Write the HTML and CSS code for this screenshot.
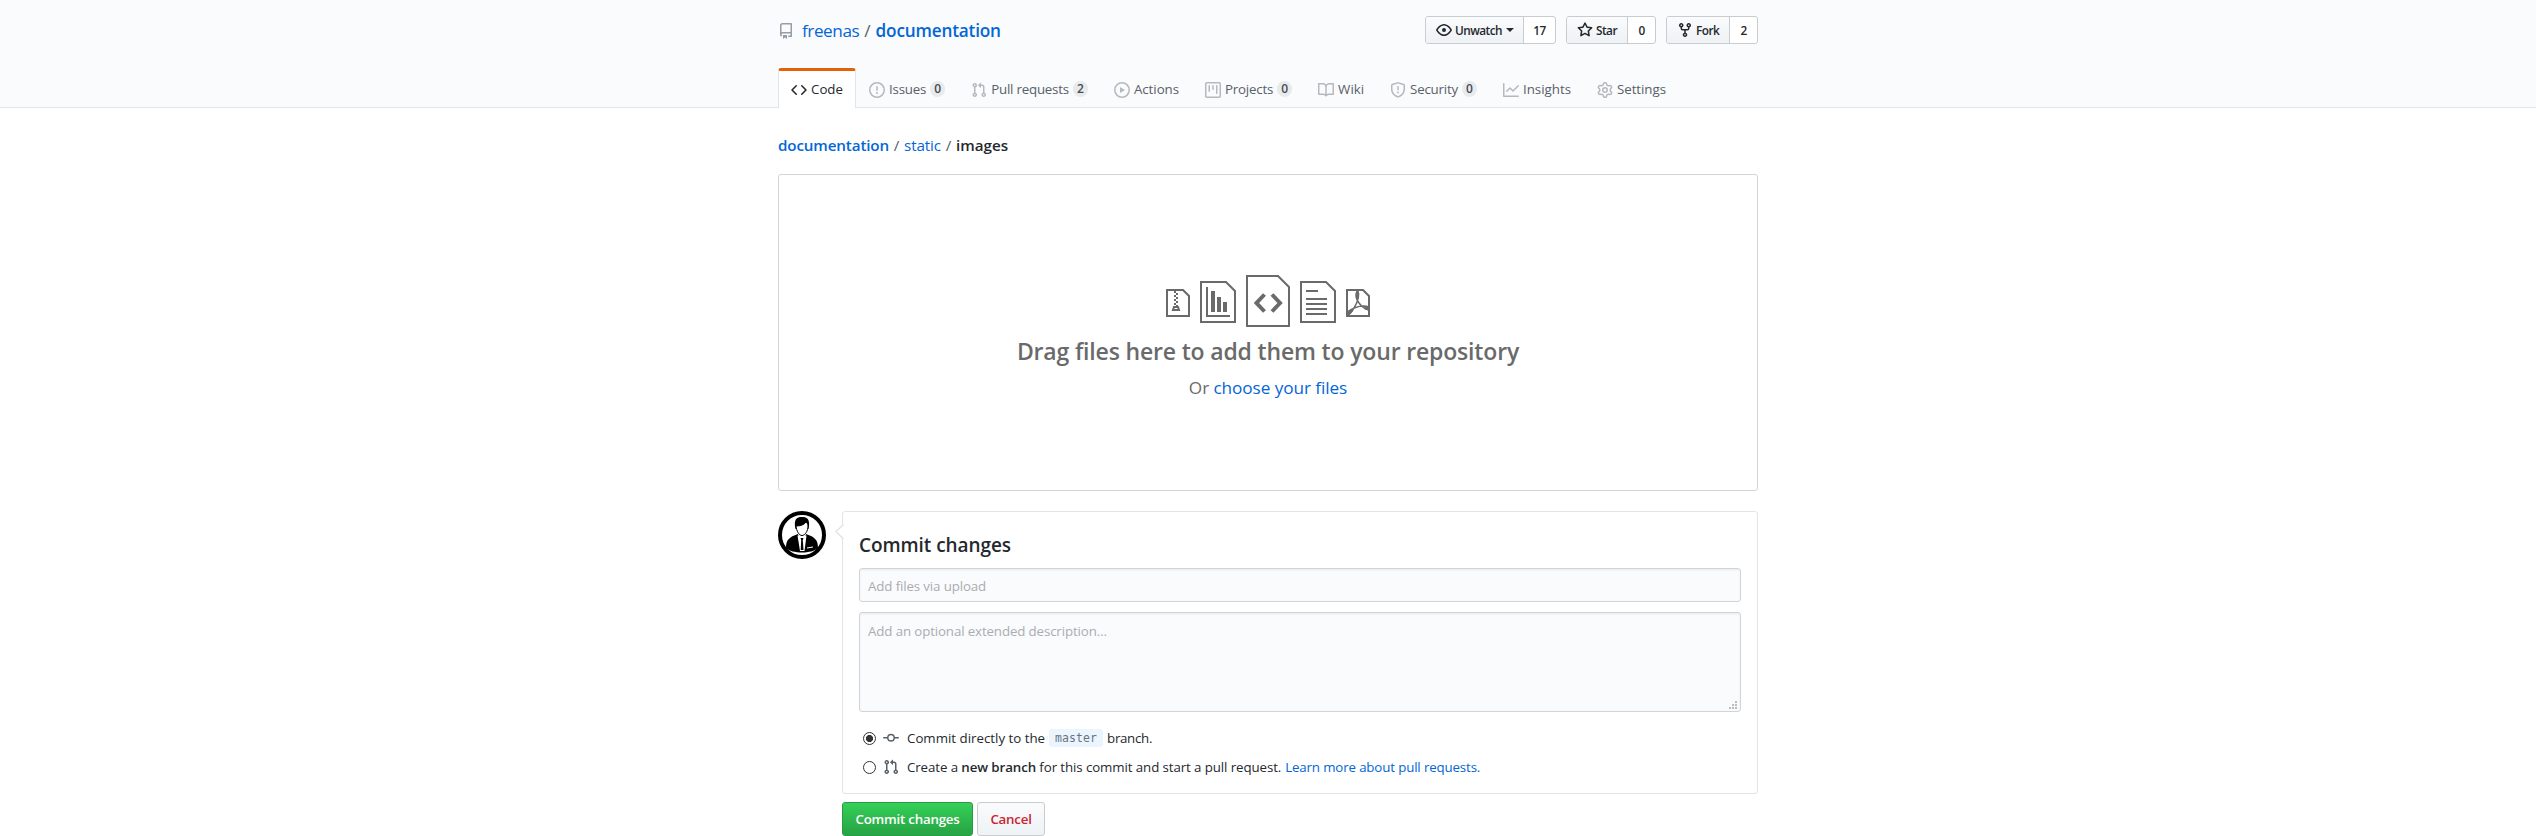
FILE: index.html
```html
<!DOCTYPE html>
<html lang="en">
<head>
<meta charset="utf-8">
<title>Upload files</title>
<link rel="stylesheet" href="styles.css">
</head>
<body>
<svg class="defs" width="0" height="0">
<symbol id="repo" viewBox="0 0 16 16"><path fill-rule="evenodd" d="M2 2.5A2.5 2.5 0 014.5 0h8.75a.75.75 0 01.75.75v12.5a.75.75 0 01-.75.75h-2.5a.75.75 0 110-1.5h1.75v-2h-8a1 1 0 00-.714 1.7.75.75 0 01-1.072 1.05A2.495 2.495 0 012 11.5v-9zm10.5-1V9h-8c-.356 0-.694.074-1 .208V2.5a1 1 0 011-1h8zM5 12.25v3.25a.25.25 0 00.4.2l1.45-1.087a.25.25 0 01.3 0L8.6 15.7a.25.25 0 00.4-.2v-3.25a.25.25 0 00-.25-.25h-3.5a.25.25 0 00-.25.25z"/></symbol>
<symbol id="code" viewBox="0 0 16 16"><path fill-rule="evenodd" d="M4.72 3.22a.75.75 0 011.06 1.06L2.06 8l3.72 3.72a.75.75 0 11-1.06 1.06L.47 8.53a.75.75 0 010-1.06l4.25-4.25zm6.56 0a.75.75 0 10-1.06 1.06L13.94 8l-3.72 3.72a.75.75 0 101.06 1.06l4.25-4.25a.75.75 0 000-1.06l-4.25-4.25z"/></symbol>
<symbol id="issue" viewBox="0 0 16 16"><path fill-rule="evenodd" d="M8 1.5a6.5 6.5 0 100 13 6.5 6.5 0 000-13zM0 8a8 8 0 1116 0A8 8 0 010 8zm9 3a1 1 0 11-2 0 1 1 0 012 0zm-.25-6.25a.75.75 0 00-1.5 0v3.5a.75.75 0 001.5 0v-3.5z"/></symbol>
<symbol id="pull" viewBox="0 0 16 16"><path fill-rule="evenodd" d="M7.177 3.073L9.573.677A.25.25 0 0110 .854v4.792a.25.25 0 01-.427.177L7.177 3.427a.25.25 0 010-.354zM3.75 2.5a.75.75 0 100 1.5.75.75 0 000-1.5zm-2.25.75a2.25 2.25 0 113 2.122v5.256a2.251 2.251 0 11-1.5 0V5.372A2.25 2.25 0 011.5 3.25zM11 2.5h-1V4h1a1 1 0 011 1v5.628a2.251 2.251 0 101.5 0V5A2.5 2.5 0 0011 2.5zm1 10.25a.75.75 0 111.5 0 .75.75 0 01-1.5 0zM3.75 12a.75.75 0 100 1.5.75.75 0 000-1.5z"/></symbol>
<symbol id="play" viewBox="0 0 16 16"><path fill-rule="evenodd" d="M1.5 8a6.5 6.5 0 1113 0 6.5 6.5 0 01-13 0zM8 0a8 8 0 100 16A8 8 0 008 0zM6.379 5.227A.25.25 0 006 5.442v5.117a.25.25 0 00.379.214l4.264-2.559a.25.25 0 000-.428L6.379 5.227z"/></symbol>
<symbol id="project" viewBox="0 0 16 16"><path fill-rule="evenodd" d="M1.75 0A1.75 1.75 0 000 1.75v12.5C0 15.216.784 16 1.75 16h12.5A1.75 1.75 0 0016 14.25V1.75A1.75 1.75 0 0014.25 0H1.75zM1.5 1.75a.25.25 0 01.25-.25h12.5a.25.25 0 01.25.25v12.5a.25.25 0 01-.25.25H1.75a.25.25 0 01-.25-.25V1.75zM11.75 3a.75.75 0 00-.75.75v7.5a.75.75 0 001.5 0v-7.5a.75.75 0 00-.75-.75zm-8.25.75a.75.75 0 011.5 0v5.5a.75.75 0 01-1.5 0v-5.5zM8 3a.75.75 0 00-.75.75v3.5a.75.75 0 001.5 0v-3.5A.75.75 0 008 3z"/></symbol>
<symbol id="book" viewBox="0 0 16 16"><path fill-rule="evenodd" d="M0 1.75A.75.75 0 01.75 1h4.253c1.227 0 2.317.59 3 1.501A3.744 3.744 0 0111.006 1h4.245a.75.75 0 01.75.75v10.5a.75.75 0 01-.75.75h-4.507a2.25 2.25 0 00-1.591.659l-.622.621a.75.75 0 01-1.06 0l-.622-.621A2.25 2.25 0 005.258 13H.75a.75.75 0 01-.75-.75V1.75zm8.755 3a2.25 2.25 0 012.25-2.25H14.5v9h-3.757c-.71 0-1.4.201-1.992.572l.004-7.322zm-1.504 7.324l.004-5.073-.002-2.253A2.25 2.25 0 005.003 2.5H1.5v9h3.757a3.75 3.75 0 011.994.574z"/></symbol>
<symbol id="shield" viewBox="0 0 16 16"><path fill-rule="evenodd" d="M7.467.133a1.75 1.75 0 011.066 0l5.25 1.68A1.75 1.75 0 0115 3.48V7c0 1.566-.32 3.182-1.303 4.682-.983 1.498-2.585 2.813-5.032 3.855a1.7 1.7 0 01-1.33 0c-2.447-1.042-4.049-2.357-5.032-3.855C1.32 10.182 1 8.566 1 7V3.48a1.75 1.75 0 011.217-1.667l5.25-1.68zm.61 1.429a.25.25 0 00-.153 0l-5.25 1.68a.25.25 0 00-.174.238V7c0 1.358.275 2.666 1.057 3.86.784 1.194 2.121 2.34 4.366 3.297a.2.2 0 00.154 0c2.245-.956 3.582-2.104 4.366-3.298C13.225 9.666 13.5 8.36 13.5 7V3.48a.25.25 0 00-.174-.237l-5.25-1.68zM9 10.5a1 1 0 11-2 0 1 1 0 012 0zm-.25-5.75a.75.75 0 10-1.5 0v3a.75.75 0 001.5 0v-3z"/></symbol>
<symbol id="graph" viewBox="0 0 16 16"><path fill-rule="evenodd" d="M1.5 1.75a.75.75 0 00-1.5 0v12.5c0 .414.336.75.75.75h14.5a.75.75 0 000-1.5H1.5V1.75zm14.28 2.53a.75.75 0 00-1.06-1.06L10 7.94 7.53 5.47a.75.75 0 00-1.06 0L3.22 8.72a.75.75 0 001.06 1.06L7 7.06l2.47 2.47a.75.75 0 001.06 0l5.25-5.25z"/></symbol>
<symbol id="gear" viewBox="0 0 16 16"><path fill-rule="evenodd" d="M7.429 1.525a6.593 6.593 0 011.142 0c.036.003.108.036.137.146l.289 1.105c.147.56.55.967.997 1.189.174.086.341.183.501.29.417.278.97.423 1.53.27l1.102-.303c.11-.03.175.016.195.046.219.31.41.641.573.989.014.031.022.11-.059.19l-.815.806c-.411.406-.562.957-.53 1.456a4.588 4.588 0 010 .582c-.032.499.119 1.05.53 1.456l.815.806c.08.08.073.159.059.19a6.494 6.494 0 01-.573.99c-.02.029-.086.074-.195.045l-1.103-.303c-.559-.153-1.112-.008-1.529.27-.16.107-.327.204-.5.29-.449.222-.851.628-.998 1.189l-.289 1.105c-.029.11-.101.143-.137.146a6.613 6.613 0 01-1.142 0c-.036-.003-.108-.037-.137-.146l-.289-1.105c-.147-.56-.55-.967-.997-1.189a4.502 4.502 0 01-.501-.29c-.417-.278-.97-.423-1.53-.27l-1.102.303c-.11.03-.175-.016-.195-.046a6.492 6.492 0 01-.573-.989c-.014-.031-.022-.11.059-.19l.815-.806c.411-.406.562-.957.53-1.456a4.587 4.587 0 010-.582c.032-.499-.119-1.05-.53-1.456l-.815-.806c-.08-.08-.073-.159-.059-.19a6.44 6.44 0 01.573-.99c.02-.029.086-.075.195-.045l1.103.303c.559.153 1.112.008 1.529-.27.16-.107.327-.204.5-.29.449-.222.851-.628.998-1.189l.289-1.105c.029-.11.101-.143.137-.146zM8 0c-.236 0-.47.01-.701.03-.743.065-1.29.615-1.458 1.261l-.29 1.106c-.017.066-.078.158-.211.224a5.994 5.994 0 00-.668.386c-.123.082-.233.09-.3.071L3.27 2.776c-.644-.177-1.392.02-1.82.63a7.977 7.977 0 00-.704 1.217c-.315.675-.111 1.422.363 1.891l.815.806c.05.048.098.147.088.294a6.084 6.084 0 000 .772c.01.147-.038.246-.088.294l-.815.806c-.474.469-.678 1.216-.363 1.891.2.428.436.835.704 1.218.428.609 1.176.806 1.82.63l1.103-.303c.066-.019.176-.011.299.071.213.143.436.272.668.386.133.066.194.158.212.224l.289 1.106c.169.646.715 1.196 1.458 1.26a8.094 8.094 0 001.402 0c.743-.064 1.29-.614 1.458-1.26l.29-1.106c.017-.066.078-.158.211-.224a5.98 5.98 0 00.668-.386c.123-.082.233-.09.3-.071l1.102.302c.644.177 1.392-.02 1.82-.63.268-.382.505-.789.704-1.217.315-.675.111-1.422-.364-1.891l-.814-.806c-.05-.048-.098-.147-.088-.294a6.1 6.1 0 000-.772c-.01-.147.039-.246.088-.294l.814-.806c.475-.469.679-1.216.364-1.891a7.992 7.992 0 00-.704-1.218c-.428-.609-1.176-.806-1.82-.63l-1.103.303c-.066.019-.176.011-.299-.071a5.991 5.991 0 00-.668-.386c-.133-.066-.194-.158-.212-.224L10.16 1.29C9.99.645 9.444.095 8.701.031A8.094 8.094 0 008 0zm1.5 8a1.5 1.5 0 11-3 0 1.5 1.5 0 013 0zM11 8a3 3 0 11-6 0 3 3 0 016 0z"/></symbol>
<symbol id="eye" viewBox="0 0 16 16"><path fill-rule="evenodd" d="M1.679 7.932c.412-.621 1.242-1.75 2.366-2.717C5.175 4.242 6.527 3.5 8 3.5c1.473 0 2.824.742 3.955 1.715 1.124.967 1.954 2.096 2.366 2.717a.119.119 0 010 .136c-.412.621-1.242 1.75-2.366 2.717C10.825 11.758 9.473 12.5 8 12.5c-1.473 0-2.824-.742-3.955-1.715C2.92 9.818 2.09 8.69 1.679 8.068a.119.119 0 010-.136zM8 2c-1.981 0-3.67.992-4.933 2.078C1.797 5.169.88 6.423.43 7.1a1.619 1.619 0 000 1.798c.45.678 1.367 1.932 2.637 3.024C4.329 13.008 6.019 14 8 14c1.981 0 3.67-.992 4.933-2.078 1.27-1.091 2.187-2.345 2.637-3.023a1.619 1.619 0 000-1.798c-.45-.678-1.367-1.932-2.637-3.023C11.671 2.992 9.981 2 8 2zm0 8a2 2 0 100-4 2 2 0 000 4z"/></symbol>
<symbol id="star" viewBox="0 0 16 16"><path fill-rule="evenodd" d="M8 .25a.75.75 0 01.673.418l1.882 3.815 4.21.612a.75.75 0 01.416 1.279l-3.046 2.97.719 4.192a.75.75 0 01-1.088.791L8 12.347l-3.766 1.98a.75.75 0 01-1.088-.79l.72-4.194L.818 6.374a.75.75 0 01.416-1.28l4.21-.611L7.327.668A.75.75 0 018 .25zm0 2.445L6.615 5.5a.75.75 0 01-.564.41l-3.097.45 2.24 2.184a.75.75 0 01.216.664l-.528 3.084 2.769-1.456a.75.75 0 01.698 0l2.77 1.456-.53-3.084a.75.75 0 01.216-.664l2.24-2.183-3.096-.45a.75.75 0 01-.564-.41L8 2.694v.001z"/></symbol>
<symbol id="fork" viewBox="0 0 16 16"><path fill-rule="evenodd" d="M5 3.25a.75.75 0 11-1.5 0 .75.75 0 011.5 0zm0 2.122a2.25 2.25 0 10-1.5 0v.878A2.25 2.25 0 005.75 8.5h1.5v2.128a2.251 2.251 0 101.5 0V8.5h1.5a2.25 2.25 0 002.25-2.25v-.878a2.25 2.25 0 10-1.5 0v.878a.75.75 0 01-.75.75h-4.5A.75.75 0 015 6.25v-.878zm3.75 7.378a.75.75 0 11-1.5 0 .75.75 0 011.5 0zm3-8.75a.75.75 0 100-1.5.75.75 0 000 1.5z"/></symbol>
<symbol id="commit" viewBox="0 0 16 16"><path fill-rule="evenodd" d="M10.5 7.75a2.5 2.5 0 11-5 0 2.5 2.5 0 015 0zm1.43.75a4.002 4.002 0 01-7.86 0H.75a.75.75 0 110-1.5h3.32a4.001 4.001 0 017.86 0h3.32a.75.75 0 110 1.5h-3.32z"/></symbol>
</svg>

<header class="pagehead">
  <div class="container">
    <div class="title-row">
      <h1 class="repo-title"><svg class="icon repo-icon"><use href="#repo"/></svg><a class="owner">freenas</a><span class="sep">/</span><a class="repo">documentation</a></h1>
      <div class="actions">
        <div class="social watch"><button class="social-btn"><svg class="icon"><use href="#eye"/></svg><span>Unwatch</span><i class="caret"></i></button><a class="social-count">17</a></div>
        <div class="social star"><button class="social-btn"><svg class="icon"><use href="#star"/></svg><span>Star</span></button><a class="social-count">0</a></div>
        <div class="social fork"><button class="social-btn"><svg class="icon"><use href="#fork"/></svg><span>Fork</span></button><a class="social-count">2</a></div>
      </div>
    </div>
    <nav class="tabs">
      <a class="tab selected"><svg class="icon"><use href="#code"/></svg><span>Code</span></a>
      <a class="tab"><svg class="icon"><use href="#issue"/></svg><span class="tight">Issues</span><b class="counter">0</b></a>
      <a class="tab"><svg class="icon"><use href="#pull"/></svg><span class="tight">Pull requests</span><b class="counter">2</b></a>
      <a class="tab"><svg class="icon"><use href="#play"/></svg><span class="snug">Actions</span></a>
      <a class="tab"><svg class="icon"><use href="#project"/></svg><span class="tight">Projects</span><b class="counter">0</b></a>
      <a class="tab"><svg class="icon"><use href="#book"/></svg><span>Wiki</span></a>
      <a class="tab"><svg class="icon"><use href="#shield"/></svg><span class="tight">Security</span><b class="counter">0</b></a>
      <a class="tab"><svg class="icon"><use href="#graph"/></svg><span>Insights</span></a>
      <a class="tab"><svg class="icon"><use href="#gear"/></svg><span class="snug">Settings</span></a>
    </nav>
  </div>
</header>

<main class="container">
  <div class="breadcrumb"><a class="crumb-root">documentation</a><span class="sep">/</span><a class="crumb-static">static</a><span class="sep">/</span><strong class="crumb-last">images</strong></div>

  <section class="dropzone">
    <svg class="file-icons" width="206" height="56" viewBox="0 0 206 56" fill="none" stroke="#6a6a6a" stroke-width="2">
      <path d="M2 16H18L24 22V42H2Z"/>
      <path stroke-dasharray="2 2" d="M10 17V33"/><path stroke-dasharray="2 2" d="M12 19V33"/>
      <path d="M9 33H13L14 36H8Z"/>
      <path d="M36 8H61L70 17V48H36Z"/>
      <path d="M42 13V42H65"/>
      <path stroke-width="4" d="M48 17V38M54 23V38M60 28V38"/>
      <path d="M82 2H113L124 13V52H82Z"/>
      <path stroke-width="4" d="M99.500 20.500L91.500 29L99.500 37.500M107 20.500L115 29L107 37.500"/>
      <path d="M136 8H161L170 17V48H136Z"/>
      <path d="M141 17H153M141 25H162M141 30H162M141 35H162M141 40H162"/>
      <path d="M182 16H198L204 22V42H182Z"/>
      <path stroke-width="1.500" d="M192 17C190.500 20 191 25 194 29C197 33 200 35 204 36M193 17C195 22 192 29 189 34C187 38 185 41 182 41M182 38C188 34 197 30.500 204 33"/>
      <path stroke-width="3" d="M192.500 18V24M200 34L204 35M183 40L187 36"/>
    </svg>
    <h2 class="drop-title">Drag files here to add them to your repository</h2>
    <p class="drop-sub">Or <a>choose your files</a></p>
  </section>

  <div class="commit">
    <svg class="avatar" width="48" height="48" viewBox="0 0 48 48">
      <circle cx="24" cy="24" r="22" fill="#fff" stroke="#000" stroke-width="4"/>
      <path d="M8 37C8 29 11 26 20 23L24 40L28 23C37 26 40 29 40 37C34 43 14 43 8 37Z"/>
      <path d="M17.500 18C15 7 20 5.500 25 6C31 6 32 11 30.500 18Z"/>
      <path fill="#fff" stroke="#000" d="M18 15C22 15 26 14 28 11C29 12 30 13 30 15C30 20 27 24.500 24 24.500C21 24.500 18.500 20 18 15Z"/>
      <path fill="#fff" d="M19.500 24.500C22 26 26 26 28.500 24.500L26.500 40H22Z"/>
      <path d="M22.500 27H25.500L24.800 29L25.500 39H22.700L23.200 29Z"/>
      <path stroke="#fff" d="M29 37L35 36"/>
    </svg>
    <div class="commit-body">
      <div class="commit-box">
        <svg class="notch" width="9" height="16" viewBox="0 0 9 16"><path fill="#fff" d="M9 0L1 8L9 16"/><path fill="none" stroke="#e1e4e8" stroke-width="1.400" d="M8.500 .5L1 7.500L8.500 15"/></svg>
        <h3 class="commit-title">Commit changes</h3>
        <div class="field subject"><span>Add files via upload</span></div>
        <div class="field description"><span>Add an optional extended description…</span>
          <svg class="grip" width="8" height="8" viewBox="0 0 8 8" fill="#bbb"><path d="M6 0h2v2h-2zM3 3h2v2h-2zM6 3h2v2h-2zM0 6h2v2h-2zM3 6h2v2h-2zM6 6h2v2h-2z"/></svg>
        </div>
        <label class="choice"><i class="radio on"></i><svg class="icon"><use href="#commit"/></svg><span>Commit directly to the</span><code class="branch">master</code><span class="branch-word">branch.</span></label>
        <label class="choice second"><i class="radio"></i><svg class="icon"><use href="#pull"/></svg><span class="pr-text">Create a <b>new branch</b> for this commit and start a pull request.</span><a class="learn">Learn more about pull requests.</a></label>
      </div>
      <div class="buttons"><button class="btn primary">Commit changes</button><button class="btn danger">Cancel</button></div>
    </div>
  </div>
</main>
</body>
</html>
```

FILE: styles.css
```css
* { box-sizing: border-box; }
body { margin: 0; height: 836px; overflow: hidden; background: #fff; color: #24292e; font-family: "Open Sans", "Noto Sans", sans-serif; font-size: 13.3px; line-height: 20px; }
.defs { position: absolute; }
h1, h2, h3, p { margin: 0; }
a { color: #0366d6; }
button { font-family: inherit; margin: 0; }
span, a, strong, h2 { white-space: nowrap; }
.icon { width: 16px; height: 16px; fill: currentColor; flex: none; }
.container { width: 980px; margin: 0 auto; }
.pagehead { height: 108px; background: #fafbfc; border-bottom: 1px solid #e1e4e8; }
.title-row { height: 68px; display: flex; justify-content: space-between; align-items: flex-start; padding-top: 16px; }
.repo-title { display: flex; align-items: center; height: 30px; font-size: 17.2px; font-weight: 400; }
.repo-icon { color: #959da5; margin-right: 8px; }
.repo-title .sep { color: #586069; margin: 0 5px; }
.owner { letter-spacing: -.45px; }
.repo { font-weight: 600; letter-spacing: -.18px; }
.actions { display: flex; gap: 10px; }
.social { display: flex; height: 28px; border: 1px solid #c9cccf; border-radius: 3px; overflow: hidden; background: #fff; font-size: 11.8px; font-weight: 600; }
.watch { width: 131px; }
.star { width: 90px; }
.fork { width: 92px; }
.social-btn { display: flex; align-items: center; gap: 3px; border: 0; border-right: 1px solid #c9cccf; padding: 0 10px; font-size: 11.8px; font-weight: 600; letter-spacing: -.53px; color: #24292e; background: linear-gradient(#fafbfc, #eff3f6 90%); }
.social-btn .icon { margin-bottom: 1px; }
.watch .social-btn { width: 98px; }
.star .social-btn { width: 61px; }
.fork .social-btn { width: 63px; }
.caret { border: 4px solid transparent; border-top-color: #24292e; border-bottom: 0; margin-left: 1px; }
.social-count { flex: 1; text-align: center; line-height: 27px; color: #24292e; letter-spacing: -.5px; }
.tabs { display: flex; height: 40px; }
.tab { display: flex; align-items: center; gap: 4px; padding: 2px 12px 0; border: 1px solid transparent; border-width: 0 1px; color: #586069; }
.tab .icon { color: #b5b9bd; margin-top: 2px; }
.tight { letter-spacing: -.2px; }
.snug { letter-spacing: -.045px; }
.tab.selected { padding: 0 12px 1px; border-color: #e1e4e8; border-top: 3px solid #e36209; border-radius: 3px 3px 0 0; background: #fff; color: #24292e; }
.tab.selected .icon { color: #24292e; }
.counter { width: 15px; height: 16px; border-radius: 8px; background: #e8eaec; color: #444d56; font-size: 12px; line-height: 16px; font-weight: 600; text-align: center; }
.breadcrumb { display: flex; padding-top: 25px; height: 66px; line-height: 24px; font-size: 15.2px; }
.breadcrumb .sep { color: #586069; width: 15px; text-align: center; }
.crumb-root, .crumb-last { font-weight: 600; }
.crumb-root { letter-spacing: -.137px; }
.crumb-static { letter-spacing: -.104px; }
.dropzone { height: 317px; border: 1px solid #d1d5da; border-radius: 3px; display: flex; flex-direction: column; align-items: center; padding-top: 99px; color: #6a6a6a; }
.drop-title { font-size: 23px; font-weight: 600; line-height: 30px; margin-top: 6px; letter-spacing: -.168px; }
.drop-sub { font-size: 17.2px; line-height: 24px; margin-top: 10px; letter-spacing: -.08px; }
.commit { display: flex; gap: 16px; margin-top: 20px; }
.commit-body { flex: 1; }
.commit-box { position: relative; height: 283px; border: 1px solid #e1e4e8; border-radius: 3px; padding: 18px 16px 0; }
.notch { position: absolute; left: -8px; top: 12px; }
.commit-title { font-size: 19px; font-weight: 600; line-height: 30px; margin-bottom: 8px; letter-spacing: -.069px; }
.field { border: 1px solid #d1d5da; border-radius: 3px; background: #fafbfc; box-shadow: inset 0 1px 2px rgba(27,31,35,.075); color: #a9adb2; padding: 0 8px; letter-spacing: -.125px; }
.subject { height: 34px; line-height: 34px; }
.description { position: relative; height: 100px; margin-top: 10px; padding-top: 8px; }
.grip { position: absolute; right: 3px; bottom: 2px; }
.choice { display: flex; align-items: center; height: 20px; margin-top: 16px; }
.second { margin-top: 9px; }
.choice .icon { color: #586069; margin: 0 8px 0 7px; }
.radio { width: 13px; height: 13px; border: 1px solid #333; border-radius: 50%; margin-left: 4px; background: #fff; }
.on { background: radial-gradient(circle, #333 3.2px, #fff 3.9px); }
.branch { margin: 0 4px; height: 18px; padding: 0 6px; line-height: 18px; border-radius: 3px; background: #eaf5ff; color: #6a737d; font-family: "DejaVu Sans Mono", monospace; font-size: 11.5px; letter-spacing: .076px; }
.branch-word { letter-spacing: -.306px; }
.pr-text { letter-spacing: -.095px; }
.pr-text b { font-weight: 600; }
.learn { margin-left: 4px; letter-spacing: -.142px; }
.buttons { display: flex; gap: 4px; margin-top: 8px; }
.btn { height: 34px; padding: 0; border: 1px solid #c9cccf; border-radius: 3px; font-size: 13.3px; font-weight: 600; letter-spacing: -.22px; }
.primary { width: 131px; color: #fff; border-color: #2a9a44; background: linear-gradient(#34d058, #28a745 90%); }
.danger { width: 68px; color: #cb2431; background: linear-gradient(#fafbfc, #eff3f6 90%); }
```
